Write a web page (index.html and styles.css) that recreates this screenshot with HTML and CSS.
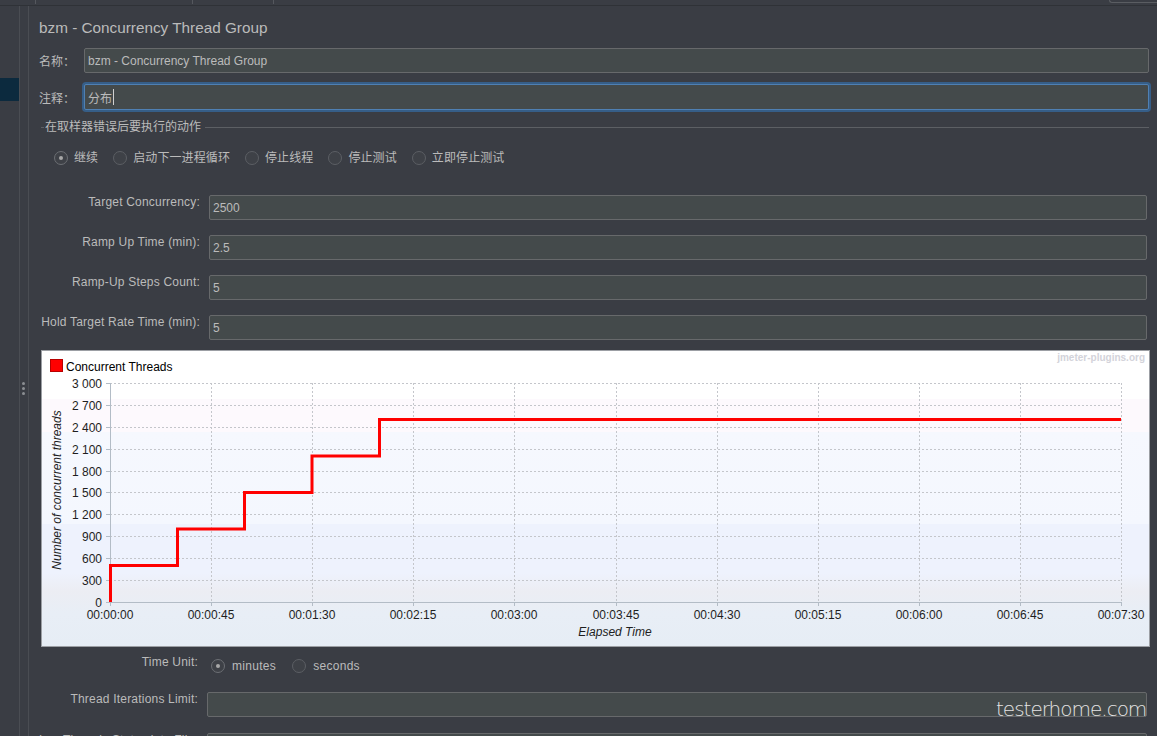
FILE: index.html
```html
<!DOCTYPE html>
<html lang="zh">
<head>
<meta charset="utf-8">
<title>bzm - Concurrency Thread Group</title>
<link rel="stylesheet" href="styles.css">
</head>
<body>
<div class="topbar">
  <span class="tb-sep s1"></span>
  <span class="tb-sep s2"></span>
  <span class="tb-sep s3"></span>
  <span class="tb-box"></span>
</div>
<div class="app">
  <aside class="tree"><div class="tree-sel"></div></aside>
  <div class="splitter"><span class="dot"></span><span class="dot"></span><span class="dot"></span></div>
  <main class="panel">
    <div class="title">bzm - Concurrency Thread Group</div>
    <div class="frow"><label>名称：</label><div class="input">bzm - Concurrency Thread Group</div></div>
    <div class="frow comment"><label>注释：</label><div class="input focus">分布<span class="caret"></span></div></div>
    <div class="group"><span class="legend">在取样器错误后要执行的动作</span></div>
    <div class="radios">
      <div class="radio on"><span class="circ"></span><span class="rl">继续</span></div>
      <div class="radio"><span class="circ"></span><span class="rl">启动下一进程循环</span></div>
      <div class="radio"><span class="circ"></span><span class="rl">停止线程</span></div>
      <div class="radio"><span class="circ"></span><span class="rl">停止测试</span></div>
      <div class="radio"><span class="circ"></span><span class="rl">立即停止测试</span></div>
    </div>
    <div class="params">
      <div class="prow"><label>Target Concurrency:</label><div class="input">2500</div></div>
      <div class="prow"><label>Ramp Up Time (min):</label><div class="input">2.5</div></div>
      <div class="prow"><label>Ramp-Up Steps Count:</label><div class="input">5</div></div>
      <div class="prow"><label>Hold Target Rate Time (min):</label><div class="input">5</div></div>
    </div>
    <div class="chart">
      <svg class="chart-svg" width="1107" height="295" viewBox="0 0 1107 295" xmlns="http://www.w3.org/2000/svg">
        <rect x="8.5" y="8.5" width="12" height="12" fill="#ff0000" stroke="#b80000"/>
        <text x="24" y="19.5" class="legend-t">Concurrent Threads</text>
        <text x="1103" y="10" class="brand">jmeter-plugins.org</text>
        <path d="M68 32.5H1079 M68 54.5H1079 M68 76.5H1079 M68 98.5H1079 M68 120.5H1079 M68 141.5H1079 M68 163.5H1079 M68 185.5H1079 M68 207.5H1079 M68 229.5H1079" stroke="#c4c6cb" stroke-width="1" stroke-dasharray="2,2" fill="none"/>
        <path d="M169.5 32V251 M270.5 32V251 M371.5 32V251 M472.5 32V251 M574.5 32V251 M675.5 32V251 M776.5 32V251 M877.5 32V251 M978.5 32V251 M1079.5 32V251" stroke="#c4c6cb" stroke-width="1" stroke-dasharray="2,2" fill="none"/>
        <path d="M68.5 32V251.5H1079.5" stroke="#b3bcc6" stroke-width="1" fill="none"/>
        <path d="M64 32.5H68 M64 54.5H68 M64 76.5H68 M64 98.5H68 M64 120.5H68 M64 141.5H68 M64 163.5H68 M64 185.5H68 M64 207.5H68 M64 229.5H68 M64 251.5H68 M68.5 251V255 M169.5 251V255 M270.5 251V255 M371.5 251V255 M472.5 251V255 M574.5 251V255 M675.5 251V255 M776.5 251V255 M877.5 251V255 M978.5 251V255 M1079.5 251V255" stroke="#b3bcc6" stroke-width="1" fill="none"/>
        <g class="ylab">
          <text x="60" y="36.5">3 000</text>
          <text x="60" y="58.5">2 700</text>
          <text x="60" y="80.5">2 400</text>
          <text x="60" y="102.5">2 100</text>
          <text x="60" y="124.5">1 800</text>
          <text x="60" y="145.5">1 500</text>
          <text x="60" y="167.5">1 200</text>
          <text x="60" y="189.5">900</text>
          <text x="60" y="211.5">600</text>
          <text x="60" y="233.5">300</text>
          <text x="60" y="255.5">0</text>
        </g>
        <g class="xlab">
          <text x="68" y="268">00:00:00</text>
          <text x="169" y="268">00:00:45</text>
          <text x="270" y="268">00:01:30</text>
          <text x="371" y="268">00:02:15</text>
          <text x="472" y="268">00:03:00</text>
          <text x="574" y="268">00:03:45</text>
          <text x="675" y="268">00:04:30</text>
          <text x="776" y="268">00:05:15</text>
          <text x="877" y="268">00:06:00</text>
          <text x="978" y="268">00:06:45</text>
          <text x="1079" y="268">00:07:30</text>
        </g>
        <text x="573" y="285" class="axis-t">Elapsed Time</text>
        <text transform="translate(19 139) rotate(-90)" class="axis-t">Number of concurrent threads</text>
        <path d="M68.5 251V214.5H135.5V178H202.5V141.5H270V105H337.5V68.5H1079" stroke="#ff0000" stroke-width="3" fill="none"/>
      </svg>
    </div>
    <div class="trow">
      <label>Time Unit:</label>
      <div class="tradios">
        <div class="radio on"><span class="circ"></span><span class="rl">minutes</span></div>
        <div class="radio"><span class="circ"></span><span class="rl">seconds</span></div>
      </div>
    </div>
    <div class="params2">
      <div class="prow"><label>Thread Iterations Limit:</label><div class="input"></div></div>
      <div class="prow"><label>Log Threads Status into File:</label><div class="input"></div></div>
    </div>
  </main>
</div>
<div class="watermark">testerhome.com</div>
</body>
</html>
```

FILE: styles.css
```css
* { box-sizing: border-box; }
html, body { margin: 0; padding: 0; }
body {
  width: 1157px;
  height: 736px;
  overflow: hidden;
  position: relative;
  background: #3a3d44;
  color: #bbbbbb;
  font-family: "Liberation Sans", "Noto Sans CJK SC", sans-serif;
  font-size: 12px;
}

/* top toolbar remnant */
.topbar {
  height: 6px;
  border-bottom: 1px solid #2f3237;
  display: flex;
  align-items: flex-start;
}
.tb-sep { width: 1px; height: 4px; background: #55585e; }
.tb-sep.s1 { margin-left: 35px; }
.tb-sep.s2 { margin-left: 156px; }
.tb-sep.s3 { margin-left: 80px; }
.tb-box {
  margin-left: auto;
  width: 48px;
  height: 3px;
  border: 1px solid #5a5d62;
  border-top: 0;
  border-right: 0;
  border-radius: 0 0 0 3px;
}

.app { display: flex; height: 730px; overflow: hidden; }

.tree {
  width: 20px;
  flex: none;
  border-right: 1px solid #4a4d53;
  padding-top: 72px;
}
.tree-sel { height: 23px; background: #0c2a3e; }

.splitter {
  width: 9px;
  flex: none;
  border-right: 1px solid #4a4d53;
  padding-top: 376px;
  padding-left: 2px;
  display: flex;
  flex-direction: column;
}
.dot {
  width: 3px;
  height: 3px;
  border-radius: 50%;
  background: #8b8e93;
  margin-bottom: 2px;
}

.panel {
  flex: 1;
  min-width: 0;
  padding: 0 8px 0 10px;
  display: flex;
  flex-direction: column;
}
.panel > * { flex-shrink: 0; }

.title {
  margin-top: 12px;
  font-size: 15.3px;
  line-height: 20px;
  color: #bbbbbb;
}

.input {
  height: 25px;
  background: #444a4b;
  border: 1px solid #67696b;
  border-radius: 2px;
  padding: 0 4px 0 3px;
  display: flex;
  align-items: center;
  color: #bbbbbb;
  font-size: 12px;
  white-space: nowrap;
}

.frow {
  display: flex;
  align-items: center;
  height: 25px;
  margin-top: 10px;
}
.frow label { width: 45px; flex: none; }
.frow .input { flex: 1; }
.frow.comment { margin-top: 11px; height: 26px; }
.input.focus {
  height: 26px;
  border-color: #4f80b3;
  box-shadow: 0 0 0 2px #365e88;
}
.caret {
  display: inline-block;
  width: 1px;
  height: 16px;
  background: #d0d0d0;
  margin-left: 1px;
}

.group {
  margin-top: 10px;
  margin-left: 2px;
  height: 14px;
  display: flex;
  align-items: center;
}
.group::before {
  content: "";
  width: 3px;
  height: 1px;
  background: #5c5f64;
  margin-right: 1px;
}
.group .legend { line-height: 14px; }
.group::after {
  content: "";
  flex: 1;
  height: 1px;
  background: #5c5f64;
  margin-left: 4px;
}

.radios {
  margin-top: 17px;
  height: 14px;
  display: flex;
  align-items: center;
  padding-left: 15px;
}
.radio { display: flex; align-items: center; margin-right: 15px; }
.rl { line-height: 14px; }
.radios .rl { letter-spacing: 0.1px; }
.circ {
  width: 14px;
  height: 14px;
  flex: none;
  border-radius: 50%;
  border: 1px solid #5c5f64;
  background: #3e4147;
  margin-right: 6px;
  display: flex;
  align-items: center;
  justify-content: center;
}
.radio.on .circ { border-color: #6c6f74; }
.radio.on .circ::after {
  content: "";
  width: 4px;
  height: 4px;
  border-radius: 50%;
  background: #a8a8a8;
}

.params {
  margin-top: 30px;
  display: flex;
  flex-direction: column;
  gap: 15px;
}
.prow { display: flex; align-items: flex-start; height: 25px; }
.prow label {
  width: 161px;
  flex: none;
  text-align: right;
  line-height: 14px;
  margin-right: 9px;
  white-space: nowrap;
  letter-spacing: 0.2px;
}
.prow .input { flex: 1; margin-right: 2px; }

.chart {
  margin: 10px -1px 0 2px;
  height: 297px;
  border: 1px solid #9c9fa4;
  background: linear-gradient(to bottom,
    #ffffff 0, #ffffff 48px,
    #fdf9fd 48px, #fdf9fd 81px,
    #f6f8fe 81px, #f4f7fe 173px,
    #eef2fd 173px, #eef2fd 222px,
    #ecedf3 240px, #e8eef6 262px, #e6edf5 297px);
  overflow: hidden;
}
.chart-svg { display: block; font-family: "Liberation Sans", Arial, sans-serif; }
.legend-t { font-size: 12px; fill: #000000; }
.brand { font-size: 10px; font-weight: bold; fill: #d3d3da; text-anchor: end; }
.ylab text { font-size: 12px; fill: #1e1e1e; text-anchor: end; }
.xlab text { font-size: 12px; fill: #1e1e1e; text-anchor: middle; }
.axis-t { font-size: 12px; font-style: italic; fill: #1e1e1e; text-anchor: middle; }

.trow {
  margin-top: 8px;
  height: 18px;
  display: flex;
  align-items: flex-start;
}
.trow label {
  width: 159px;
  flex: none;
  text-align: right;
  line-height: 14px;
  margin-right: 13px;
  letter-spacing: 0.2px;
}
.tradios { display: flex; margin-top: 4px; }
.tradios .radio { margin-right: 16px; }
.tradios .circ { margin-right: 7px; }
.tradios .rl { letter-spacing: 0.3px; }

.params2 {
  margin-top: 19px;
  display: flex;
  flex-direction: column;
  gap: 16px;
}
.params2 .prow label { width: 159px; }

.watermark {
  position: absolute;
  left: 996px;
  top: 697px;
  font-family: "DejaVu Sans", sans-serif;
  font-weight: 200;
  font-size: 20px;
  line-height: 24px;
  letter-spacing: -1px;
  color: #e4e4e4;
  white-space: nowrap;
}
```
